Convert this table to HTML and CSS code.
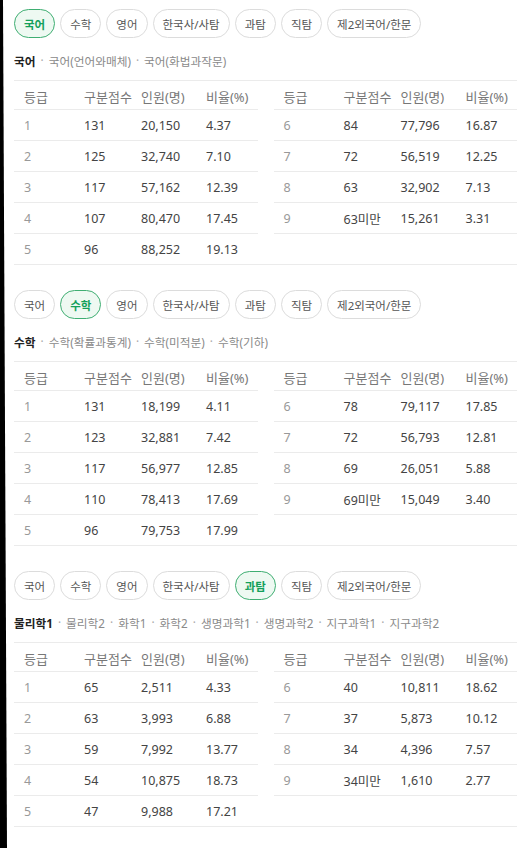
FILE: index.html
```html
<!DOCTYPE html>
<html lang="ko">
<head>
<meta charset="utf-8">
<link rel="stylesheet" href="styles.css">
</head>
<body>
<div class="edge"></div>
<main class="page">

<section class="sec">
  <div class="tabs">
    <span class="pill on">국어</span><span class="pill">수학</span><span class="pill">영어</span><span class="pill">한국사/사탐</span><span class="pill">과탐</span><span class="pill">직탐</span><span class="pill">제2외국어/한문</span>
  </div>
  <div class="sub"><b>국어</b><i>·</i><span>국어(언어와매체)</span><i>·</i><span>국어(화법과작문)</span></div>
  <div class="tbls">
    <div class="tbl">
      <div class="row head"><span>등급</span><span>구분점수</span><span>인원(명)</span><span>비율(%)</span></div>
      <div class="row"><span>1</span><span>131</span><span>20,150</span><span>4.37</span></div>
      <div class="row"><span>2</span><span>125</span><span>32,740</span><span>7.10</span></div>
      <div class="row"><span>3</span><span>117</span><span>57,162</span><span>12.39</span></div>
      <div class="row"><span>4</span><span>107</span><span>80,470</span><span>17.45</span></div>
      <div class="row"><span>5</span><span>96</span><span>88,252</span><span>19.13</span></div>
    </div>
    <div class="tbl">
      <div class="row head"><span>등급</span><span>구분점수</span><span>인원(명)</span><span>비율(%)</span></div>
      <div class="row"><span>6</span><span>84</span><span>77,796</span><span>16.87</span></div>
      <div class="row"><span>7</span><span>72</span><span>56,519</span><span>12.25</span></div>
      <div class="row"><span>8</span><span>63</span><span>32,902</span><span>7.13</span></div>
      <div class="row"><span>9</span><span>63미만</span><span>15,261</span><span>3.31</span></div>
    </div>
  </div>
</section>

<section class="sec">
  <div class="tabs">
    <span class="pill">국어</span><span class="pill on">수학</span><span class="pill">영어</span><span class="pill">한국사/사탐</span><span class="pill">과탐</span><span class="pill">직탐</span><span class="pill">제2외국어/한문</span>
  </div>
  <div class="sub"><b>수학</b><i>·</i><span>수학(확률과통계)</span><i>·</i><span>수학(미적분)</span><i>·</i><span>수학(기하)</span></div>
  <div class="tbls">
    <div class="tbl">
      <div class="row head"><span>등급</span><span>구분점수</span><span>인원(명)</span><span>비율(%)</span></div>
      <div class="row"><span>1</span><span>131</span><span>18,199</span><span>4.11</span></div>
      <div class="row"><span>2</span><span>123</span><span>32,881</span><span>7.42</span></div>
      <div class="row"><span>3</span><span>117</span><span>56,977</span><span>12.85</span></div>
      <div class="row"><span>4</span><span>110</span><span>78,413</span><span>17.69</span></div>
      <div class="row"><span>5</span><span>96</span><span>79,753</span><span>17.99</span></div>
    </div>
    <div class="tbl">
      <div class="row head"><span>등급</span><span>구분점수</span><span>인원(명)</span><span>비율(%)</span></div>
      <div class="row"><span>6</span><span>78</span><span>79,117</span><span>17.85</span></div>
      <div class="row"><span>7</span><span>72</span><span>56,793</span><span>12.81</span></div>
      <div class="row"><span>8</span><span>69</span><span>26,051</span><span>5.88</span></div>
      <div class="row"><span>9</span><span>69미만</span><span>15,049</span><span>3.40</span></div>
    </div>
  </div>
</section>

<section class="sec">
  <div class="tabs">
    <span class="pill">국어</span><span class="pill">수학</span><span class="pill">영어</span><span class="pill">한국사/사탐</span><span class="pill on">과탐</span><span class="pill">직탐</span><span class="pill">제2외국어/한문</span>
  </div>
  <div class="sub"><b>물리학1</b><i>·</i><span>물리학2</span><i>·</i><span>화학1</span><i>·</i><span>화학2</span><i>·</i><span>생명과학1</span><i>·</i><span>생명과학2</span><i>·</i><span>지구과학1</span><i>·</i><span>지구과학2</span></div>
  <div class="tbls">
    <div class="tbl">
      <div class="row head"><span>등급</span><span>구분점수</span><span>인원(명)</span><span>비율(%)</span></div>
      <div class="row"><span>1</span><span>65</span><span>2,511</span><span>4.33</span></div>
      <div class="row"><span>2</span><span>63</span><span>3,993</span><span>6.88</span></div>
      <div class="row"><span>3</span><span>59</span><span>7,992</span><span>13.77</span></div>
      <div class="row"><span>4</span><span>54</span><span>10,875</span><span>18.73</span></div>
      <div class="row"><span>5</span><span>47</span><span>9,988</span><span>17.21</span></div>
    </div>
    <div class="tbl">
      <div class="row head"><span>등급</span><span>구분점수</span><span>인원(명)</span><span>비율(%)</span></div>
      <div class="row"><span>6</span><span>40</span><span>10,811</span><span>18.62</span></div>
      <div class="row"><span>7</span><span>37</span><span>5,873</span><span>10.12</span></div>
      <div class="row"><span>8</span><span>34</span><span>4,396</span><span>7.57</span></div>
      <div class="row"><span>9</span><span>34미만</span><span>1,610</span><span>2.77</span></div>
    </div>
  </div>
</section>

</main>
</body>
</html>
```
FILE: styles.css
```css
* { box-sizing: border-box; }
html, body { margin: 0; padding: 0; background: #fff; }
body {
  font-family: "Noto Sans", "Noto Sans CJK KR", sans-serif;
  color: #444;
}
.edge {
  position: fixed;
  left: 0; top: 0; bottom: 0;
  width: 8px;
  background: #000;
  clip-path: polygon(0 0, 3px 0, 7px 100%, 0 100%);
  z-index: 5;
}
.page {
  padding: 9px 5px 0 14px;
  display: flex;
  flex-direction: column;
  gap: 25px;
}
.sec { display: flex; flex-direction: column; }
.tabs { display: flex; gap: 5px; }
.pill {
  height: 29px;
  padding: 0 9px;
  border: 1px solid #dcdcdc;
  border-radius: 15px;
  display: flex;
  align-items: center;
  font-size: 11.5px;
  color: #555;
  background: #fff;
}
.pill.on {
  border-color: #3fae72;
  background: #eef9f2;
  color: #13a05a;
  font-weight: 600;
}
.sub {
  margin-top: 14px;
  height: 16px;
  display: flex;
  align-items: center;
  font-size: 11.7px;
  color: #8a8a8a;
  white-space: nowrap;
}
.sub b { color: #222; font-weight: 700; }
.sub i { font-style: normal; color: #aaa; margin: 0 5px; }
.tbls {
  margin-top: 12px;
  border-top: 1px solid #ebebeb;
  border-bottom: 1px solid #ebebeb;
  display: grid;
  grid-template-columns: 1fr 1fr;
  column-gap: 16px;
}
.row {
  display: grid;
  grid-template-columns: 60px 57px 65px 1fr;
  align-items: center;
  height: 31px;
  padding-left: 10px;
  border-bottom: 1px solid #ebebeb;
  font-size: 12.5px;
  color: #444;
}
.row.head { height: 29px; padding-top: 2px; color: #777; font-size: 13px; }
.row span:first-child { color: #999; }
.row.head span:first-child { color: #777; }
.tbl:first-child .row:last-child { border-bottom: none; height: 30px; }
```
